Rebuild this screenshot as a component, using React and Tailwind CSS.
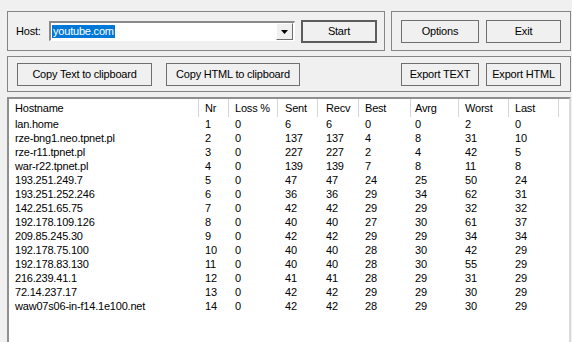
const rows = [
  ["lan.home", 1, 0, 6, 6, 0, 0, 2, 0],
  ["rze-bng1.neo.tpnet.pl", 2, 0, 137, 137, 4, 8, 31, 10],
  ["rze-r11.tpnet.pl", 3, 0, 227, 227, 2, 4, 42, 5],
  ["war-r22.tpnet.pl", 4, 0, 139, 139, 7, 8, 11, 8],
  ["193.251.249.7", 5, 0, 47, 47, 24, 25, 50, 24],
  ["193.251.252.246", 6, 0, 36, 36, 29, 34, 62, 31],
  ["142.251.65.75", 7, 0, 42, 42, 29, 29, 32, 32],
  ["192.178.109.126", 8, 0, 40, 40, 27, 30, 61, 37],
  ["209.85.245.30", 9, 0, 42, 42, 29, 29, 34, 34],
  ["192.178.75.100", 10, 0, 40, 40, 28, 30, 42, 29],
  ["192.178.83.130", 11, 0, 40, 40, 28, 30, 55, 29],
  ["216.239.41.1", 12, 0, 41, 41, 28, 29, 31, 29],
  ["72.14.237.17", 13, 0, 42, 42, 29, 29, 30, 29],
  ["waw07s06-in-f14.1e100.net", 14, 0, 42, 42, 28, 29, 30, 29],
];

// widths + left padding per column, measured off the list view
const cols = [
  { name: "Hostname", w: "w-[190px]", pl: "pl-[6px]" },
  { name: "Nr", w: "w-[30px]", pl: "pl-[6px]" },
  { name: "Loss %", w: "w-[49px]", pl: "pl-[6px]" },
  { name: "Sent", w: "w-[40px]", pl: "pl-[7px]" },
  { name: "Recv", w: "w-[41px]", pl: "pl-[8px]" },
  { name: "Best", w: "w-[52px]", pl: "pl-[6px]" },
  { name: "Avrg", w: "w-[48px]", pl: "pl-[4px]" },
  { name: "Worst", w: "w-[50px]", pl: "pl-[6px]" },
  { name: "Last", w: "w-[50px]", pl: "pl-[6px]" },
];

const Btn = ({ children, className = "" }) => (
  <button
    className={
      "h-[23px] flex items-center justify-center border border-[#6e6e6e] bg-[#f0f0f0] " +
      className
    }
  >
    {children}
  </button>
);

const App = () => {
  return (
    <div className="w-[572px] h-[342px] overflow-hidden bg-[#f0f0f0] pt-[11px] pl-[7px] font-['Liberation_Sans',Arial,sans-serif] text-[11px] tracking-[-0.2px] text-black">
      {/* top row */}
      <div className="flex gap-[6px] h-[40px]">
        <div className="w-[378px] flex items-center border border-[#858585] pl-[8px]">
          <span className="w-[33px]">Host:</span>
          <div className="w-[246px] h-[20px] flex items-center bg-white border-t-2 border-l-2 border-t-[#8a8a8a] border-l-[#8a8a8a] border-b border-r border-b-white border-r-white">
            <div className="flex-1 pl-[1px]">
              <span className="bg-[#0078d7] text-white px-[1px] leading-[13px] inline-block">
                youtube.com
              </span>
            </div>
            <div className="w-[17px] h-[17px] mr-[1px] flex items-center justify-center bg-[#f0f0f0] border border-t-white border-l-white border-b-[#6e6e6e] border-r-[#6e6e6e]">
              <svg width="7" height="4" viewBox="0 0 7 4">
                <path d="M0 0h7L3.5 4z" fill="#000" />
              </svg>
            </div>
          </div>
          <button className="ml-[6px] w-[76px] h-[23px] flex items-center justify-center border-2 border-[#5c5c5c] bg-[#f0f0f0]">
            Start
          </button>
        </div>
        <div className="w-[180px] flex items-center gap-[7px] border border-[#858585] pl-[9px]">
          <Btn className="w-[78px]">Options</Btn>
          <Btn className="w-[75px]">Exit</Btn>
        </div>
      </div>

      {/* clipboard / export row */}
      <div className="mt-[5px] w-[564px] h-[36px] flex items-center border border-[#858585] pl-[9px] pr-[9px]">
        <Btn className="w-[135px]">Copy Text to clipboard</Btn>
        <Btn className="ml-[14px] w-[134px]">Copy HTML to clipboard</Btn>
        <div className="ml-auto flex gap-[7px]">
          <Btn className="w-[78px]">Export TEXT</Btn>
          <Btn className="w-[75px]">Export HTML</Btn>
        </div>
      </div>

      {/* result list */}
      <div className="mt-[5px] w-[564px] h-[260px] bg-white border-t-2 border-l-2 border-t-[#8f8f8f] border-l-[#8f8f8f] border-r-2 border-r-[#dadada]">
        <div className="flex h-[18px] items-center">
          {cols.map((c) => (
            <div
              key={c.name}
              className={`${c.w} ${c.pl} h-full flex items-center border-r border-[#d5d5d5]`}
            >
              {c.name}
            </div>
          ))}
        </div>
        {rows.map((r) => (
          <div key={r[0]} className="flex h-[14px] leading-[14px]">
            {r.map((v, i) => (
              <div key={i} className={`${cols[i].w} ${cols[i].pl} whitespace-nowrap`}>
                {v}
              </div>
            ))}
          </div>
        ))}
      </div>
    </div>
  );
};

export default App;
